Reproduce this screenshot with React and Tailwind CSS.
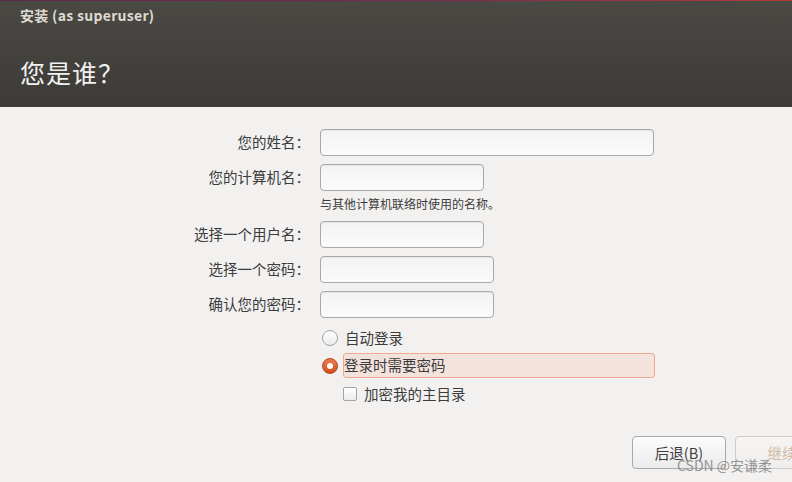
const FIELDS = [
  { label: "您的姓名：", width: "w-[334px]" },
  { label: "您的计算机名：", width: "w-[164px]", hint: "与其他计算机联络时使用的名称。" },
  { label: "选择一个用户名：", width: "w-[164px]" },
  { label: "选择一个密码：", width: "w-[174px]" },
  { label: "确认您的密码：", width: "w-[174px]" },
];

function Field({ label, width }) {
  return (
    <div className="flex items-center h-[27px]">
      <div className="w-[310px] text-right text-[14.5px] text-[#3c3c3c] leading-none">{label}</div>
      <div
        className={`ml-[10px] h-[27px] ${width} rounded-[4px] border border-[#a9a9a9] bg-gradient-to-b from-[#f3f3f3] to-[#fbfbfb] shadow-[inset_0_1px_1px_rgba(0,0,0,0.06)]`}
      />
    </div>
  );
}

function Radio({ checked }) {
  if (checked) {
    return (
      <span className="flex items-center justify-center w-4 h-4 shrink-0 rounded-full border border-[#b4461d] bg-gradient-to-b from-[#ee7b4d] to-[#d14f1c]">
        <span className="w-[6px] h-[6px] rounded-full bg-white" />
      </span>
    );
  }
  return <span className="w-4 h-4 shrink-0 rounded-full border border-[#a4a4a4] bg-gradient-to-b from-[#ffffff] to-[#ececec]" />;
}

export default function App() {
  return (
    <div
      className="relative h-[482px] w-[792px] overflow-hidden bg-[#f2f1f0] flex flex-col"
      style={{ fontFamily: '"Noto Sans CJK SC", "Noto Sans", sans-serif' }}
    >
      <div className="h-px bg-gradient-to-r from-[#5e2750] via-[#772953] to-[#b13a35]" />
      <div className="h-[106px] bg-gradient-to-b from-[#4a4944] to-[#3c3b37] px-5 flex flex-col">
        <div className="pt-[4px] text-[14px] font-bold text-[#dfdbd2] leading-[20px] tracking-[0.3px]">安装 (as superuser)</div>
        <div className="mt-[32px] text-[25px] text-[#f2f1f0] leading-[30px] tracking-[1px]">您是谁？</div>
      </div>

      <div className="pt-[22px] flex flex-col">
        <Field {...FIELDS[0]} />
        <div className="mt-2">
          <Field {...FIELDS[1]} />
        </div>
        <div className="ml-[320px] mt-[5px] text-[12px] text-[#3c3c3c] leading-[16px]">{FIELDS[1].hint}</div>
        <div className="mt-[9px] flex flex-col gap-2">
          <Field {...FIELDS[2]} />
          <Field {...FIELDS[3]} />
          <Field {...FIELDS[4]} />
        </div>

        <div className="ml-[322px] mt-3 flex flex-col">
          <div className="flex items-center h-4 gap-[7px]">
            <Radio />
            <span className="text-[14.5px] text-[#3c3c3c] leading-none">自动登录</span>
          </div>
          <div className="flex items-center mt-[7px] h-[25px]">
            <Radio checked />
            <div className="ml-[5px] h-[25px] w-[312px] flex items-center rounded-[3px] border border-[#f0a88f] bg-[#f4e2dd] text-[14.5px] text-[#3c3c3c] leading-none">
              登录时需要密码
            </div>
          </div>
          <div className="ml-[21px] mt-[9px] flex items-center h-[14px] gap-[7px]">
            <span className="w-[14px] h-[14px] shrink-0 rounded-[2px] border border-[#a4a4a4] bg-gradient-to-b from-[#ffffff] to-[#ececec]" />
            <span className="text-[14.5px] text-[#3c3c3c] leading-none">加密我的主目录</span>
          </div>
        </div>

        <div className="mt-[35px] ml-[632px] flex gap-[9px]">
          <button className="w-[94px] h-[33px] shrink-0 rounded-[4px] border border-[#a9a9a9] bg-gradient-to-b from-[#fbfbfb] to-[#ececec] text-[14.5px] text-[#3c3c3c]">
            后退(B)
          </button>
          <button className="w-[94px] h-[33px] shrink-0 rounded-[4px] border border-[#cfcdca] bg-gradient-to-b from-[#f6f5f4] to-[#efeeed] text-[14.5px] text-[#d2bca8]">
            继续
          </button>
        </div>
      </div>

      <div className="absolute left-[677px] top-[456px] text-[14px] text-[#8c8c8c] opacity-90 leading-[18px]">
        CSDN @安谦柔
      </div>
    </div>
  );
}
